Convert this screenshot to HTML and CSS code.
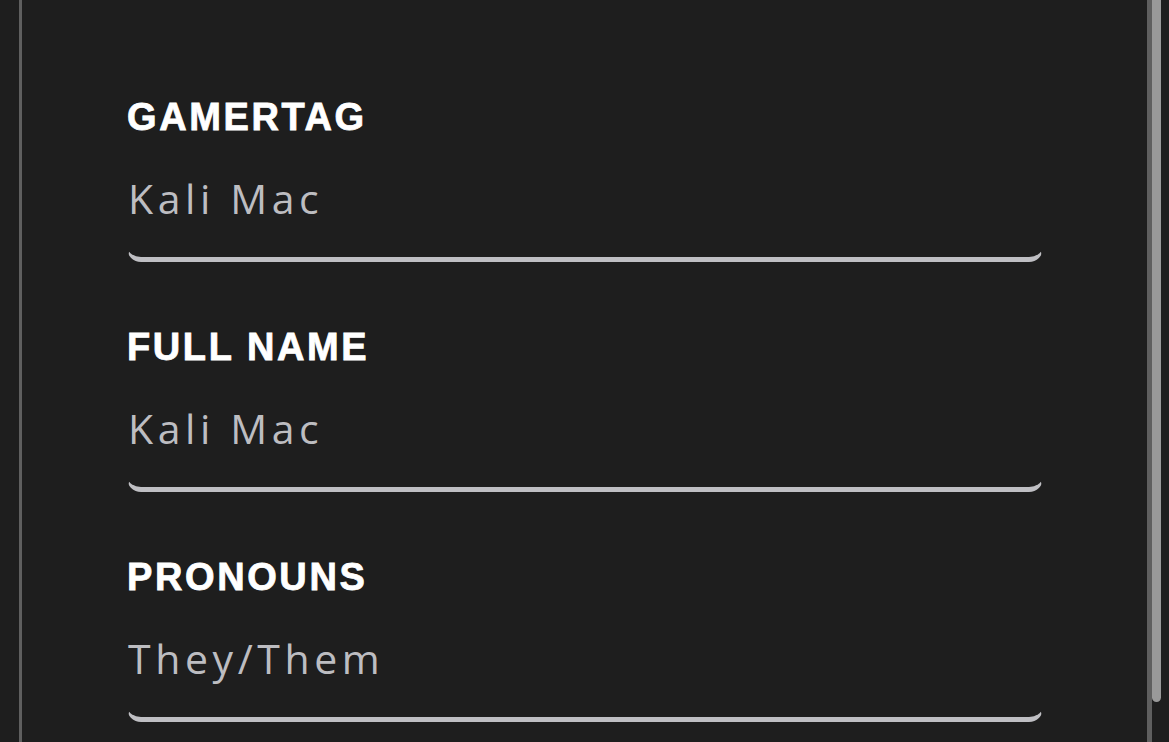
FILE: index.html
```html
<!DOCTYPE html>
<html lang="en">
<head>
<meta charset="utf-8">
<title>Profile</title>
<link rel="stylesheet" href="styles.css">
</head>
<body>
<div class="panel">
  <form class="form">
    <div class="field">
      <label class="label">GAMERTAG</label>
      <div class="control">Kali Mac</div>
    </div>
    <div class="field">
      <label class="label">FULL NAME</label>
      <div class="control">Kali Mac</div>
    </div>
    <div class="field">
      <label class="label">PRONOUNS</label>
      <div class="control">They/Them</div>
    </div>
  </form>
</div>
<div class="scroll-thumb"></div>
</body>
</html>
```
FILE: styles.css
```css
html, body {
  margin: 0;
  padding: 0;
  background: #1e1e1e;
  height: 100%;
  overflow: hidden;
}

.panel {
  box-sizing: border-box;
  margin-left: 19px;
  width: 1133px;
  min-height: 900px;
  border-left: 3px solid #5f5f5f;
  border-right: 5px solid #5f5f5f;
  background: #1e1e1e;
  padding: 99px 0 0 105px;
}

.form {
  display: flex;
  flex-direction: column;
  gap: 67px;
  width: 916px;
}

.field {
  display: flex;
  flex-direction: column;
  gap: 28px;
}

.label {
  font-family: "Liberation Sans", Arial, sans-serif;
  font-weight: 700;
  font-size: 38px;
  line-height: 37px;
  letter-spacing: 2.6px;
  color: #ffffff;
  -webkit-text-stroke: 0.8px #ffffff;
}

.control {
  box-sizing: border-box;
  height: 98px;
  padding: 14px 0 40px 0;
  border: 1px solid transparent;
  border-bottom: 5px solid #bfbfc3;
  border-radius: 14px;
  font-family: "Open Sans", sans-serif;
  font-weight: 500;
  font-size: 41px;
  line-height: 38px;
  letter-spacing: 4.6px;
  color: #bdbdc1;
}

.scroll-thumb {
  position: absolute;
  left: 1152px;
  top: -20px;
  width: 9px;
  height: 722px;
  border-radius: 5px;
  background: #999999;
}
```
